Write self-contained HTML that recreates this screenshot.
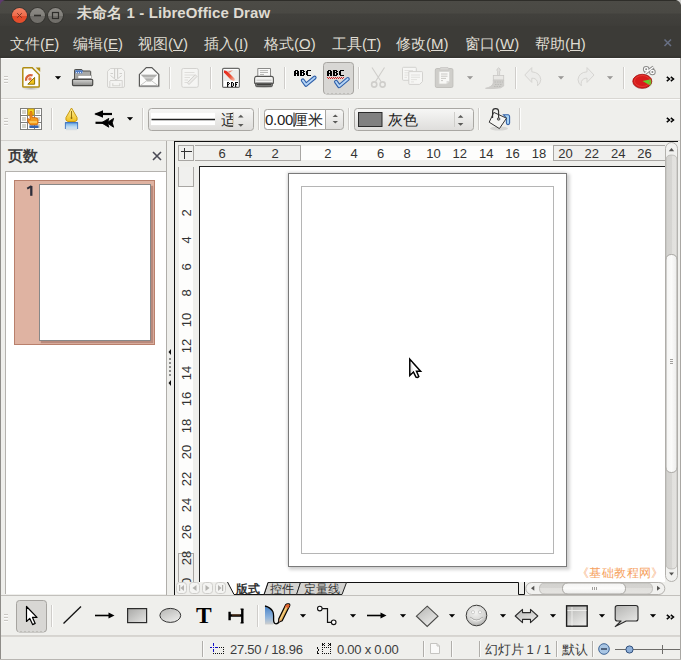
<!DOCTYPE html>
<html><head><meta charset="utf-8">
<style>
*{margin:0;padding:0;box-sizing:border-box}
html,body{width:681px;height:660px;overflow:hidden;background:#efefec;font-family:"Liberation Sans",sans-serif;position:relative}
.a{position:absolute}
svg{position:absolute;overflow:visible;z-index:3}
#title{left:0;top:0;width:681px;height:26px;background:linear-gradient(#2e2d29 0,#2e2d29 1px,#4c4b46 1px,#4a4944 13px,#42413d 14px,#3e3d39 26px);}
#menu{left:0;top:26px;width:681px;height:32px;background:linear-gradient(#3c3b37 0,#3c3b37 29px,#33322e 32px);}
.mi{position:absolute;top:8.5px;color:#dfdbd2;font-size:15px;white-space:nowrap}
.tb{left:0;width:681px;background:#efefec}
.sep{position:absolute;width:1px;background:#cfcdca;z-index:3;box-shadow:1px 0 0 #fdfdfc}
.grip{position:absolute;z-index:3;width:4px;height:8px;background:repeating-linear-gradient(#c9c7c3 0 1px,#fafaf9 1px 2px,transparent 2px 3px)}
.dd{position:absolute;width:0;height:0;border-left:3px solid transparent;border-right:3px solid transparent;border-top:3px solid #222}
.ddg{border-top-color:#aaa}
.rn{position:absolute;top:147px;font-size:13px;color:#333;width:20px;text-align:center;margin-left:-10px;line-height:13px}
.vn{position:absolute;left:179px;width:16px;height:20px;margin-top:-10px;font-size:13px;color:#333;line-height:16px;text-align:center}
.vn span{display:inline-block;transform:rotate(-90deg);white-space:nowrap}
.st{position:absolute;top:642px;font-size:13px;color:#3c3c3c;white-space:nowrap;line-height:15px;letter-spacing:-0.25px}
.ssep{position:absolute;top:641px;width:1px;height:16px;background:#b0aeaa;box-shadow:1px 0 0 #fafaf9}
</style></head><body>

<!-- TITLE BAR -->
<div id="title" class="a">
  <svg style="left:0;top:0" width="70" height="27" viewBox="0 0 70 27">
    <path d="M0 0H5Q1 1 0 5Z" fill="#5e3a6e"/>
    <defs>
      <linearGradient id="gc" x1="0" y1="0" x2="0" y2="1"><stop offset="0" stop-color="#f38466"/><stop offset="0.5" stop-color="#ee6c4c"/><stop offset="0.55" stop-color="#e44a2a"/><stop offset="1" stop-color="#e4502e"/></linearGradient>
      <linearGradient id="gm" x1="0" y1="0" x2="0" y2="1"><stop offset="0" stop-color="#8c8a85"/><stop offset="0.5" stop-color="#82807b"/><stop offset="0.55" stop-color="#6e6c68"/><stop offset="1" stop-color="#72706b"/></linearGradient>
    </defs>
    <circle cx="19.5" cy="15.5" r="8.3" fill="#34332f"/>
    <circle cx="19.5" cy="15.5" r="7.5" fill="url(#gc)"/>
    <path d="M17.2 13.2L21.8 17.8M21.8 13.2L17.2 17.8" stroke="#7a3424" stroke-width="1"/>
    <circle cx="37.5" cy="15.5" r="8.3" fill="#34332f"/>
    <circle cx="37.5" cy="15.5" r="7.5" fill="url(#gm)"/>
    <path d="M34 15.5H41" stroke="#2e2d2a" stroke-width="1.6"/>
    <circle cx="55.5" cy="15.5" r="8.3" fill="#34332f"/>
    <circle cx="55.5" cy="15.5" r="7.5" fill="url(#gm)"/>
    <rect x="52.5" y="12.5" width="6" height="6" fill="none" stroke="#2e2d2a" stroke-width="1.2"/>
  </svg>
  <div class="a" style="left:77px;top:4px;color:#dfdbd2;font-size:15px;font-weight:bold;letter-spacing:0.1px;white-space:nowrap">未命名 1 - LibreOffice Draw</div>
  <svg style="left:676px;top:0" width="5" height="6"><path d="M0 0H5V5Q4 1 0 0Z" fill="#cfcfcd"/></svg>
</div>

<!-- MENU -->
<div id="menu" class="a">
  <span class="mi" style="left:10px">文件(<u>F</u>)</span>
  <span class="mi" style="left:73px">编辑(<u>E</u>)</span>
  <span class="mi" style="left:138px">视图(<u>V</u>)</span>
  <span class="mi" style="left:204px">插入(<u>I</u>)</span>
  <span class="mi" style="left:264px">格式(<u>O</u>)</span>
  <span class="mi" style="left:332px">工具(<u>T</u>)</span>
  <span class="mi" style="left:396px">修改(<u>M</u>)</span>
  <span class="mi" style="left:465px">窗口(<u>W</u>)</span>
  <span class="mi" style="left:535px">帮助(<u>H</u>)</span>
  <svg style="left:663px;top:12px" width="10" height="9"><path d="M1.5 1.5L8 8M8 1.5L1.5 8" stroke="#687084" stroke-width="1.5" fill="none"/></svg>
</div>

<!-- TOOLBAR 1 -->
<div class="a tb" style="top:58px;height:41px;border-top:1px solid #fbfbfa;border-bottom:1px solid #d9d7d3"></div>


<!-- TOOLBAR 2 -->
<div class="a tb" style="top:99px;height:42px;border-top:1px solid #fbfbfa;border-bottom:1px solid #d3d1cd"></div>
<div id="tb2icons"></div>
<div class="sep" style="left:169px;top:67px;height:22px"></div>
<div class="sep" style="left:210px;top:67px;height:22px"></div>
<div class="sep" style="left:284px;top:67px;height:22px"></div>
<div class="sep" style="left:358px;top:67px;height:22px"></div>
<div class="sep" style="left:515px;top:67px;height:22px"></div>
<div class="sep" style="left:623px;top:67px;height:22px"></div>
<div class="sep" style="left:51px;top:108px;height:22px"></div>
<div class="sep" style="left:142px;top:108px;height:22px"></div>
<div class="sep" style="left:258px;top:108px;height:22px"></div>
<div class="sep" style="left:348px;top:108px;height:22px"></div>
<div class="sep" style="left:478px;top:108px;height:22px"></div>
<div class="sep" style="left:519px;top:108px;height:22px"></div>
<div class="sep" style="left:51px;top:605px;height:22px"></div>
<div class="sep" style="left:257px;top:605px;height:22px"></div>
<svg style="left:54.5px;top:75.5px" width="7" height="5"><path d="M0.5 0.5H5.5L3 3.2Z" fill="#000" stroke="#000" stroke-width="0.6"/></svg>
<svg style="left:466.5px;top:75.5px" width="7" height="5"><path d="M0.5 0.5H5.5L3 3.2Z" fill="#9a9997" stroke="#9a9997" stroke-width="0.6"/></svg>
<svg style="left:557.5px;top:75.5px" width="7" height="5"><path d="M0.5 0.5H5.5L3 3.2Z" fill="#9a9997" stroke="#9a9997" stroke-width="0.6"/></svg>
<svg style="left:607.0px;top:75.5px" width="7" height="5"><path d="M0.5 0.5H5.5L3 3.2Z" fill="#9a9997" stroke="#9a9997" stroke-width="0.6"/></svg>
<svg style="left:127.0px;top:116.5px" width="7" height="5"><path d="M0.5 0.5H5.5L3 3.2Z" fill="#000" stroke="#000" stroke-width="0.6"/></svg>
<svg style="left:299.5px;top:614.0px" width="7" height="5"><path d="M0.5 0.5H5.5L3 3.2Z" fill="#000" stroke="#000" stroke-width="0.6"/></svg>
<svg style="left:349.5px;top:614.0px" width="7" height="5"><path d="M0.5 0.5H5.5L3 3.2Z" fill="#000" stroke="#000" stroke-width="0.6"/></svg>
<svg style="left:399.5px;top:614.0px" width="7" height="5"><path d="M0.5 0.5H5.5L3 3.2Z" fill="#000" stroke="#000" stroke-width="0.6"/></svg>
<svg style="left:449.0px;top:614.0px" width="7" height="5"><path d="M0.5 0.5H5.5L3 3.2Z" fill="#000" stroke="#000" stroke-width="0.6"/></svg>
<svg style="left:499.5px;top:614.0px" width="7" height="5"><path d="M0.5 0.5H5.5L3 3.2Z" fill="#000" stroke="#000" stroke-width="0.6"/></svg>
<svg style="left:549.5px;top:614.0px" width="7" height="5"><path d="M0.5 0.5H5.5L3 3.2Z" fill="#000" stroke="#000" stroke-width="0.6"/></svg>
<svg style="left:599.0px;top:614.0px" width="7" height="5"><path d="M0.5 0.5H5.5L3 3.2Z" fill="#000" stroke="#000" stroke-width="0.6"/></svg>
<svg style="left:649.5px;top:614.0px" width="7" height="5"><path d="M0.5 0.5H5.5L3 3.2Z" fill="#000" stroke="#000" stroke-width="0.6"/></svg>
<svg style="left:665.5px;top:75.5px" width="9" height="6"><path d="M0.8 0.8L3.5 3L0.8 5.2M4.8 0.8L7.5 3L4.8 5.2" stroke="#000" stroke-width="1.5" fill="none"/></svg>
<svg style="left:665.5px;top:116.5px" width="9" height="6"><path d="M0.8 0.8L3.5 3L0.8 5.2M4.8 0.8L7.5 3L4.8 5.2" stroke="#000" stroke-width="1.5" fill="none"/></svg>
<svg style="left:665.5px;top:613.5px" width="9" height="6"><path d="M0.8 0.8L3.5 3L0.8 5.2M4.8 0.8L7.5 3L4.8 5.2" stroke="#000" stroke-width="1.5" fill="none"/></svg>
<div class="grip" style="left:4px;top:76px"></div>
<div class="grip" style="left:4px;top:118px"></div>
<div class="grip" style="left:4px;top:614px"></div>


<!-- LEFT PANE -->
<div class="a" style="left:0;top:58px;width:1px;height:602px;background:#8f8d89;z-index:2"></div>
<div class="a" style="left:8px;top:147px;font-size:15px;font-weight:bold;color:#3c3c3c">页数</div>
<svg style="left:152px;top:151px" width="10" height="10"><path d="M1 1L9 9M9 1L1 9" stroke="#4a4a55" stroke-width="1.6"/></svg>
<div class="a" style="left:5px;top:171px;width:162px;height:423px;background:#fff;border-top:1px solid #b4b2ae;border-left:1px solid #b4b2ae"></div>
<div class="a" style="left:166px;top:141px;width:1px;height:454px;background:#b0aeaa"></div>
<div class="a" style="left:14px;top:180px;width:141px;height:165px;background:#dfb3a2;border:1px solid #b9806c"></div>
<svg style="left:25px;top:184px" width="10" height="14" viewBox="25 184 10 14"><path d="M31.3 186V195.8" stroke="#2e2e3a" stroke-width="2.3"/><path d="M27.2 188.6L31.5 186.2" stroke="#2e2e3a" stroke-width="1.9"/></svg>
<div class="a" style="left:39px;top:184px;width:112px;height:157px;background:#fff;border:1px solid #888;box-shadow:2px 2px 1px #b98a7c"></div>
<!-- splitter -->
<svg style="left:167px;top:340px" width="7" height="50">
  <path d="M4 9L1.5 12L4 15Z" fill="#111"/>
  <path d="M4 40L1.5 43L4 46Z" fill="#111"/>
  <circle cx="3" cy="19" r="0.8" fill="#111"/><circle cx="3" cy="23" r="0.8" fill="#111"/><circle cx="3" cy="27" r="0.8" fill="#111"/><circle cx="3" cy="31" r="0.8" fill="#111"/><circle cx="3" cy="35" r="0.8" fill="#111"/>
</svg>

<!-- CANVAS AREA -->
<div class="a" style="left:174px;top:141px;width:504px;height:1px;background:#111"></div>
<div class="a" style="left:174px;top:141px;width:1px;height:454px;background:#111"></div>
<!-- ruler corner -->
<div class="a" style="left:178px;top:145px;width:16px;height:16px;border:1px solid #a8a6a3;background:#f0f0ee"></div>
<svg style="left:178px;top:145px" width="16" height="16"><path d="M3 6.5H14M6.5 3V14" stroke="#333" stroke-width="1"/></svg>
<!-- horizontal ruler -->
<div class="a" style="left:195px;top:145px;width:106px;height:16px;border:1px solid #a8a6a3;border-left:none;background:#f0f0ee"></div>
<div class="a" style="left:301px;top:146px;width:252px;height:14px;background:#fdfdfc"></div>
<div class="a" style="left:553px;top:145px;width:112px;height:16px;border:1px solid #a8a6a3;border-right:none;background:#f0f0ee"></div>
<div class="rn" style="left:222.2px">6</div>
<div class="rn" style="left:248.6px">4</div>
<div class="rn" style="left:275.0px">2</div>
<div class="rn" style="left:327.8px">2</div>
<div class="rn" style="left:354.2px">4</div>
<div class="rn" style="left:380.6px">6</div>
<div class="rn" style="left:407.0px">8</div>
<div class="rn" style="left:433.4px">10</div>
<div class="rn" style="left:459.8px">12</div>
<div class="rn" style="left:486.2px">14</div>
<div class="rn" style="left:512.6px">16</div>
<div class="rn" style="left:539.0px">18</div>
<div class="rn" style="left:565.4px">20</div>
<div class="rn" style="left:591.8px">22</div>
<div class="rn" style="left:618.2px">24</div>
<div class="rn" style="left:644.6px">26</div>
<!-- vertical ruler -->
<div class="a" style="left:178px;top:167px;width:16px;height:20px;border:1px solid #a8a6a3;border-top:none;background:#f0f0ee"></div>
<div class="a" style="left:179px;top:187px;width:14px;height:366px;background:#fdfdfc"></div>
<div class="a" style="left:178px;top:553px;width:16px;height:29px;border:1px solid #a8a6a3;border-bottom:none;background:#f0f0ee"></div>
<div class="a" style="left:0;top:0;width:681px;height:582px;overflow:hidden">
<div class="vn" style="top:215.4px"><span>2</span></div>
<div class="vn" style="top:241.9px"><span>4</span></div>
<div class="vn" style="top:268.5px"><span>6</span></div>
<div class="vn" style="top:295.0px"><span>8</span></div>
<div class="vn" style="top:321.5px"><span>10</span></div>
<div class="vn" style="top:348.0px"><span>12</span></div>
<div class="vn" style="top:374.5px"><span>14</span></div>
<div class="vn" style="top:401.0px"><span>16</span></div>
<div class="vn" style="top:427.5px"><span>18</span></div>
<div class="vn" style="top:454.0px"><span>20</span></div>
<div class="vn" style="top:480.5px"><span>22</span></div>
<div class="vn" style="top:507.0px"><span>24</span></div>
<div class="vn" style="top:533.5px"><span>26</span></div>
<div class="vn" style="top:560.0px"><span>28</span></div>
<div class="vn" style="top:586.5px"><span>30</span></div>
</div>
<!-- canvas -->
<div class="a" style="left:199px;top:166px;width:466px;height:416px;background:#fff;border-left:1px solid #222;border-top:1px solid #222"></div>
<!-- page shadow -->
<div class="a" style="left:284px;top:169px;width:287px;height:402px;background:radial-gradient(closest-side,#999 0,#999 100%);opacity:0.0"></div>
<div class="a" style="left:288px;top:173px;width:279px;height:394px;background:#fff;border:1px solid #7a7a7a;box-shadow:2px 2px 3px 1px rgba(0,0,0,0.17),-1px -1px 3px 0 rgba(0,0,0,0.12)"></div>
<div class="a" style="left:301px;top:186px;width:253px;height:368px;border:1px solid #b5b5b5"></div>
<!-- mouse cursor -->
<svg style="left:400px;top:350px" width="30" height="35" viewBox="400 350 30 35">
  <path d="M409.8 359.2V375.5L413.4 372L416 377.2Q417.5 378 418.8 376.5L416.5 371.2H420.6Z" fill="#fff" stroke="#000" stroke-width="1.5" stroke-linejoin="miter"/>
  <path d="M411 362V373L413 371L411.5 362Z" fill="#e6e6e6"/>
</svg>
<!-- watermark -->
<div class="a" style="left:577px;top:564.5px;font-size:12px;color:#f6a160;white-space:nowrap;letter-spacing:0.4px">《基础教程网》</div>

<!-- vertical scrollbar -->
<svg style="left:664px;top:141px" width="16" height="442" viewBox="664 141 16 442">
  <defs>
    <linearGradient id="trv" x1="0" y1="0" x2="1" y2="0"><stop offset="0" stop-color="#d3d2cf"/><stop offset="0.5" stop-color="#d6d5d2"/><stop offset="0.5" stop-color="#e1e0dd"/><stop offset="1" stop-color="#e4e3e0"/></linearGradient>
    <linearGradient id="thv" x1="0" y1="0" x2="1" y2="0"><stop offset="0" stop-color="#f4f4f3"/><stop offset="0.5" stop-color="#fbfbfa"/><stop offset="1" stop-color="#ececeb"/></linearGradient>
  </defs>
  <rect x="665.5" y="142.5" width="12" height="439" rx="6" fill="#f1f1ef" stroke="#b3b1ad" stroke-width="1"/>
  <path d="M666 160Q666 155 671.5 155Q677 155 677 160V564Q677 569 671.5 569Q666 569 666 564Z" fill="url(#trv)" stroke="#b8b6b2" stroke-width="0.8"/>
  <path d="M666 260Q666 254.5 671.5 254.5Q677 254.5 677 260V467Q677 472.5 671.5 472.5Q666 472.5 666 467Z" fill="url(#thv)" stroke="#a9a7a3" stroke-width="1"/>
  <path d="M668.8 151.2L671.5 148L674.2 151.2Z" fill="#555452"/>
  <path d="M669 572.5H674L671.5 575.5Z" fill="#555452"/>
  <path d="M670 359.5H673M670 361.5H673M670 363.5H673" stroke="#8a8884" stroke-width="0.8"/>
</svg>
<!-- tab bar -->
<div class="a" style="left:175px;top:582px;width:504px;height:13px;background:#efefec"></div>
<svg style="left:174px;top:581px" width="355" height="15" viewBox="174 581 355 15">
  <g fill="#f4f4f2" stroke="#cfcecb" stroke-width="1">
    <rect x="176.5" y="582.5" width="10" height="11" rx="3"/>
    <rect x="189.5" y="582.5" width="10" height="11" rx="3"/>
    <rect x="202.5" y="582.5" width="10" height="11" rx="3"/>
    <rect x="215.5" y="582.5" width="10" height="11" rx="3"/>
  </g>
  <g fill="#b3b2af">
    <rect x="179" y="585" width="1.2" height="6"/><path d="M184 585V591L180.5 588Z"/>
    <path d="M196.5 585V591L192.5 588Z"/>
    <path d="M205.5 585V591L209.5 588Z"/>
    <path d="M218 585V591L221.5 588Z"/><rect x="222" y="585" width="1.2" height="6"/>
  </g>
  <path d="M230 582.5H518.5V594.5H524.5V582" fill="none" stroke="#111" stroke-width="1"/>
  <path d="M268 582.5L264 594.5H297L300.5 582.5Z" fill="#d4d3d0" stroke="#222" stroke-width="1"/>
  <path d="M300.5 582.5L296.5 594.5H342L346.5 582.5Z" fill="#d4d3d0" stroke="#222" stroke-width="1"/>
  <path d="M227.5 582L234 594.5H264L268 582Z" fill="#fff" stroke="none"/>
  <path d="M227.5 582L234 594.5H264L268 582.5" fill="none" stroke="#111" stroke-width="1"/>
</svg>
<div class="a" style="left:236px;top:581px;font-size:12px;font-weight:bold;color:#333;z-index:4;white-space:nowrap">版式</div>
<div class="a" style="left:270px;top:581px;font-size:12px;color:#333;z-index:4;white-space:nowrap">控件</div>
<div class="a" style="left:304px;top:581px;font-size:12px;color:#333;z-index:4;white-space:nowrap">定量线</div>

<!-- horizontal scrollbar -->
<svg style="left:524px;top:581px" width="143" height="15" viewBox="524 581 143 15">
  <defs>
    <linearGradient id="trh" x1="0" y1="0" x2="0" y2="1"><stop offset="0" stop-color="#d3d2cf"/><stop offset="0.5" stop-color="#d6d5d2"/><stop offset="0.5" stop-color="#e1e0dd"/><stop offset="1" stop-color="#e4e3e0"/></linearGradient>
    <linearGradient id="thh" x1="0" y1="0" x2="0" y2="1"><stop offset="0" stop-color="#f4f4f3"/><stop offset="0.5" stop-color="#fbfbfa"/><stop offset="1" stop-color="#ececeb"/></linearGradient>
  </defs>
  <rect x="525.8" y="582.5" width="139" height="12" rx="6" fill="#f1f1ef" stroke="#b3b1ad" stroke-width="1"/>
  <path d="M545 583Q539.5 583 539.5 588.5Q539.5 594 545 594H647Q652.5 594 652.5 588.5Q652.5 583 647 583Z" fill="url(#trh)" stroke="#b8b6b2" stroke-width="0.8"/>
  <path d="M568 583Q562.5 583 562.5 588.5Q562.5 594 568 594H620Q625.5 594 625.5 588.5Q625.5 583 620 583Z" fill="url(#thh)" stroke="#a9a7a3" stroke-width="1"/>
  <path d="M534.3 585.8V590.8L531 588.3Z" fill="#555452"/>
  <path d="M657 585.8V590.8L660.3 588.3Z" fill="#555452"/>
  <path d="M592.5 587V590M594.5 587V590M596.5 587V590" stroke="#8a8884" stroke-width="0.8"/>
</svg>
<!-- DRAWING TOOLBAR -->
<div class="a tb" style="top:595px;height:41px;border-top:1px solid #c2c0bc;border-bottom:1px solid #d6d4d0"></div>
<div id="tb3icons"></div>

<!-- STATUS BAR -->
<div class="a" style="left:0;top:636px;width:681px;height:24px;background:#efefec"></div>
<div class="a" style="left:0;top:636px;width:681px;height:1px;background:#d8d6d2"></div>
<div class="ssep" style="left:202px"></div>
<div class="ssep" style="left:423px"></div>
<div class="ssep" style="left:451px"></div>
<div class="ssep" style="left:479px"></div>
<div class="ssep" style="left:556px"></div>
<div class="ssep" style="left:592px"></div>
<svg style="left:205px;top:638px" width="25" height="20" viewBox="205 638 25 20" shape-rendering="crispEdges"><g fill="#1010c8"><rect x="213" y="643" width="1" height="3"/><rect x="213" y="649" width="1" height="3"/><rect x="210" y="647" width="2" height="1"/><rect x="215" y="647" width="3" height="1"/><rect x="213" y="647" width="1" height="1"/></g><g fill="#111"><rect x="219" y="647" width="1" height="1"/><rect x="221" y="647" width="1" height="1"/><rect x="223" y="647" width="1" height="1"/><rect x="223" y="649" width="1" height="1"/><rect x="223" y="651" width="1" height="1"/><rect x="213" y="653" width="1" height="1"/><rect x="215" y="653" width="1" height="1"/><rect x="217" y="653" width="1" height="1"/><rect x="219" y="653" width="1" height="1"/><rect x="221" y="653" width="1" height="1"/><rect x="223" y="653" width="1" height="1"/></g></svg>
<div class="st" style="left:230px">27.50 / 18.96</div>
<svg style="left:312px;top:638px" width="25" height="20" viewBox="312 638 25 20" shape-rendering="crispEdges"><g fill="#111"><rect x="322" y="647" width="1" height="1"/><rect x="322" y="653" width="1" height="1"/><rect x="324" y="647" width="1" height="1"/><rect x="324" y="653" width="1" height="1"/><rect x="326" y="647" width="1" height="1"/><rect x="326" y="653" width="1" height="1"/><rect x="328" y="647" width="1" height="1"/><rect x="328" y="653" width="1" height="1"/><rect x="330" y="647" width="1" height="1"/><rect x="330" y="653" width="1" height="1"/><rect x="322" y="649" width="1" height="1"/><rect x="330" y="649" width="1" height="1"/><rect x="322" y="651" width="1" height="1"/><rect x="330" y="651" width="1" height="1"/><rect x="322" y="643" width="1" height="3"/><rect x="323" y="644" width="1" height="1"/><rect x="324" y="643" width="1" height="1"/><rect x="324" y="645" width="1" height="1"/><rect x="330" y="643" width="1" height="3"/><rect x="329" y="644" width="1" height="1"/><rect x="328" y="643" width="1" height="1"/><rect x="328" y="645" width="1" height="1"/><rect x="317" y="647" width="1" height="2"/><rect x="318" y="649" width="1" height="1"/><rect x="317" y="651" width="1" height="3"/><rect x="318" y="650" width="1" height="1"/><rect x="318" y="653" width="1" height="1"/></g></svg>
<div class="st" style="left:337px">0.00 x 0.00</div>
<svg style="left:429px;top:642px" width="12" height="13" viewBox="0 0 12 13">
  <path d="M1.5 1.5H8L10.5 4V11.5H1.5Z" fill="#fafaf9" stroke="#c5c4c1" stroke-width="1"/>
  <path d="M8 1.5V4H10.5" fill="none" stroke="#c5c4c1"/>
</svg>
<div class="st" style="left:485px">幻灯片 1 / 1</div>
<div class="st" style="left:562px">默认</div>
<svg style="left:598px;top:643px" width="83" height="12" viewBox="0 0 83 12">
  <circle cx="6" cy="6" r="5.3" fill="#a9c6e4" stroke="#3d6496" stroke-width="1"/>
  <path d="M3 6H9" stroke="#22314a" stroke-width="1.3"/>
  <path d="M17 6.5H83" stroke="#6d6c69" stroke-width="1"/>
  <path d="M64.5 2V11" stroke="#6d6c69" stroke-width="1"/>
  <circle cx="31.5" cy="6.5" r="3.6" fill="#8fb0d8" stroke="#2f4f7d" stroke-width="1"/>
</svg>


<div class="a" style="left:680px;top:58px;width:1px;height:602px;background:#a9a7a3;z-index:5"></div>
<!-- ===== TOOLBAR 1 ICONS ===== -->
<svg style="left:0;top:57px" width="681" height="42" viewBox="0 57 681 42">
  <defs>
    <linearGradient id="tray" x1="0" y1="0" x2="0" y2="1"><stop offset="0" stop-color="#d6d6d4"/><stop offset="1" stop-color="#8a8a88"/></linearGradient>
    <linearGradient id="flap" x1="0" y1="0" x2="0" y2="1"><stop offset="0" stop-color="#c4c4c2"/><stop offset="0.25" stop-color="#a4a4a2"/><stop offset="0.5" stop-color="#d2d2d0"/><stop offset="1" stop-color="#9c9c9a"/></linearGradient>
    <radialGradient id="shd" cx="0.5" cy="0.5" r="0.5"><stop offset="0" stop-color="#000" stop-opacity="0.22"/><stop offset="1" stop-color="#000" stop-opacity="0"/></radialGradient>
  </defs>
  <!-- new doc -->
  <ellipse cx="31" cy="88.5" rx="9" ry="2" fill="url(#shd)"/>
  <path d="M22.8 68.6Q22.8 67.8 23.6 67.8H32.2L39.2 74.8V86.2Q39.2 87 38.4 87H23.6Q22.8 87 22.8 86.2Z" fill="#fdfdfb" stroke="#b08d12" stroke-width="1.5"/>
  <path d="M35.6 67.4H40.2V72Z" fill="#b08d12"/>
  <path d="M26.2 80.8A4.6 4.6 0 0 1 32.6 75.6" fill="none" stroke="#d6623a" stroke-width="2.2"/>
  <circle cx="30" cy="79" r="1.8" fill="#ef7b4f"/>
  <path d="M27.8 84.2L34.6 77.4V84.2Z" fill="#f2c21e" stroke="#8d7208" stroke-width="1"/>
  <!-- open folder -->
  <path d="M74.5 79.5V70.2Q74.5 69.5 75.2 69.5H81.8L83 71H90Q90.7 71 90.7 71.7V79.5Z" fill="#a9a9a7" stroke="#4f4f4d" stroke-width="1"/>
  <rect x="75.3" y="70.3" width="7.4" height="3" fill="#4f7cc6"/>
  <path d="M76 72.6H82.5" stroke="#fff" stroke-width="0.9" stroke-dasharray="1 1"/>
  <rect x="78" y="75.5" width="13.5" height="3.2" fill="#fff" stroke="#8a8a88" stroke-width="0.5"/>
  <path d="M72.5 80.2Q72.5 79.3 73.4 79.3H91.8Q92.7 79.3 92.7 80.2V84.6Q92.7 85.6 91.7 85.6H73.5Q72.5 85.6 72.5 84.6Z" fill="url(#tray)" stroke="#4a4a48" stroke-width="1.2"/>
  <!-- save disabled -->
  <g fill="none" stroke="#d4d3d0" stroke-width="1">
    <path d="M110.5 68.5H121.8L124.5 71.3V86Q124.5 87.5 123 87.5H109Q107.5 87.5 107.5 86V71.3Z" fill="#f4f4f2"/>
    <path d="M110 80.5H122.5M109.8 81V87M122.2 81V87"/>
    <path d="M112.8 83.3V85.8H119.8V83.3" stroke-width="1.1"/>
    <path d="M114.6 68.5V78.5M117.6 68.5V78.5" stroke="#cdccc9" stroke-width="1.1"/>
    <path d="M110.5 75.5L116.1 80L121.7 75.5M110.5 73.5H113M119.5 73.5H122" stroke="#d0cfcc"/>
  </g>
  <!-- email -->
  <path d="M146.3 67.6H151.8L158.8 74.4V86.2H139.4V74.4Z" fill="#fbfbfa" stroke="#5a5a58" stroke-width="1.2"/>
  <path d="M140.6 74.4H157.6L151.6 80.8H146.6Z" fill="url(#flap)"/>
  <path d="M140.2 85.6L147 80.5M158 85.6L151.2 80.5M147 81.2H151.2" stroke="#c2c2c0" stroke-width="0.9"/>
  <rect x="139.5" y="86.3" width="19.6" height="1" fill="#aaa" opacity="0.5"/>
  <!-- edit doc disabled -->
  <rect x="181.8" y="68.5" width="16.5" height="18.8" rx="1.6" fill="#f5f5f3" stroke="#d3d2cf" stroke-width="1"/>
  <path d="M184.5 72.5H194.5M184.5 75H194.5M184.5 77.5H190M184.5 80H188M184.5 82.5H187" stroke="#dcdbd8" stroke-width="0.9"/>
  <path d="M189 84.5L197 76.5L195.2 74.7L187.3 82.7Z" fill="#ecebe8" stroke="#cdccc9" stroke-width="0.9"/>
  <!-- pdf -->
  <defs><linearGradient id="pdfr" x1="0" y1="0" x2="1" y2="1"><stop offset="0" stop-color="#e8201a"/><stop offset="0.55" stop-color="#e84a30"/><stop offset="1" stop-color="#f8c8b8"/></linearGradient></defs>
  <rect x="222.6" y="68.4" width="16.8" height="19" rx="1.2" fill="#fff" stroke="#6a6a68" stroke-width="1.2"/>
  <rect x="224" y="70" width="14" height="11" fill="#ececea"/>
  <path d="M224 70.5Q226 70 228 72L234.5 78.5Q235.5 80.5 233.5 81L230.5 79.5L224 72.5Z" fill="url(#pdfr)"/>
  <path d="M228 71.5Q231 70.8 233 70.3Q230.5 72 229.5 72.8Z" fill="#f06a50" opacity="0.8"/>
  <g fill="#111" shape-rendering="crispEdges"><rect x="227" y="82" width="1" height="1"/><rect x="228" y="82" width="1" height="1"/><rect x="227" y="83" width="1" height="1"/><rect x="229" y="83" width="1" height="1"/><rect x="227" y="84" width="1" height="1"/><rect x="228" y="84" width="1" height="1"/><rect x="227" y="85" width="1" height="1"/><rect x="227" y="86" width="1" height="1"/><rect x="231" y="82" width="1" height="1"/><rect x="232" y="82" width="1" height="1"/><rect x="231" y="83" width="1" height="1"/><rect x="233" y="83" width="1" height="1"/><rect x="231" y="84" width="1" height="1"/><rect x="233" y="84" width="1" height="1"/><rect x="231" y="85" width="1" height="1"/><rect x="233" y="85" width="1" height="1"/><rect x="231" y="86" width="1" height="1"/><rect x="232" y="86" width="1" height="1"/><rect x="235" y="82" width="1" height="1"/><rect x="236" y="82" width="1" height="1"/><rect x="237" y="82" width="1" height="1"/><rect x="235" y="83" width="1" height="1"/><rect x="235" y="84" width="1" height="1"/><rect x="236" y="84" width="1" height="1"/><rect x="235" y="85" width="1" height="1"/><rect x="235" y="86" width="1" height="1"/></g><g fill="#111" opacity="0.55"><rect x="227.8" y="82" width="0.6" height="5"/><rect x="231.8" y="82" width="0.6" height="5"/><rect x="235.8" y="82" width="0.6" height="5"/></g>
  <!-- printer -->
  <ellipse cx="264" cy="87" rx="10" ry="1.5" fill="url(#shd)"/>
  <path d="M257.8 77V68.5H270.5V77" fill="#fafaf9" stroke="#8a8a88" stroke-width="1"/>
  <path d="M259.8 70.6H268M260 72.5H268M260 74.5H264" stroke="#a8a8a6" stroke-width="0.8"/>
  <path d="M254.6 78.4Q254.6 76.4 256.6 76.4H271.4Q273.4 76.4 273.4 78.4V83.2H254.6Z" fill="#f2f2f0" stroke="#555553" stroke-width="1.1"/>
  <path d="M256.5 80.2H271.5" stroke="#b8b8b6" stroke-width="0.8"/>
  <path d="M255.6 83.2H272.4V85.6Q272.4 86.6 271.4 86.6H256.6Q255.6 86.6 255.6 85.6Z" fill="#7a7a78" stroke="#4a4a48" stroke-width="0.9"/>
  <path d="M257 84.6H271" stroke="#3a3a38" stroke-width="1"/>
  <!-- spell ABC -->
  <g fill="#000" shape-rendering="crispEdges"><rect x="295" y="70" width="1" height="1"/><rect x="296" y="70" width="1" height="1"/><rect x="297" y="70" width="1" height="1"/><rect x="294" y="71" width="1" height="1"/><rect x="295" y="71" width="1" height="1"/><rect x="297" y="71" width="1" height="1"/><rect x="298" y="71" width="1" height="1"/><rect x="294" y="72" width="1" height="1"/><rect x="295" y="72" width="1" height="1"/><rect x="297" y="72" width="1" height="1"/><rect x="298" y="72" width="1" height="1"/><rect x="294" y="73" width="1" height="1"/><rect x="295" y="73" width="1" height="1"/><rect x="296" y="73" width="1" height="1"/><rect x="297" y="73" width="1" height="1"/><rect x="298" y="73" width="1" height="1"/><rect x="294" y="74" width="1" height="1"/><rect x="295" y="74" width="1" height="1"/><rect x="297" y="74" width="1" height="1"/><rect x="298" y="74" width="1" height="1"/><rect x="294" y="75" width="1" height="1"/><rect x="295" y="75" width="1" height="1"/><rect x="297" y="75" width="1" height="1"/><rect x="298" y="75" width="1" height="1"/><rect x="300" y="70" width="1" height="1"/><rect x="301" y="70" width="1" height="1"/><rect x="302" y="70" width="1" height="1"/><rect x="303" y="70" width="1" height="1"/><rect x="300" y="71" width="1" height="1"/><rect x="301" y="71" width="1" height="1"/><rect x="303" y="71" width="1" height="1"/><rect x="304" y="71" width="1" height="1"/><rect x="300" y="72" width="1" height="1"/><rect x="301" y="72" width="1" height="1"/><rect x="302" y="72" width="1" height="1"/><rect x="303" y="72" width="1" height="1"/><rect x="300" y="73" width="1" height="1"/><rect x="301" y="73" width="1" height="1"/><rect x="303" y="73" width="1" height="1"/><rect x="304" y="73" width="1" height="1"/><rect x="300" y="74" width="1" height="1"/><rect x="301" y="74" width="1" height="1"/><rect x="303" y="74" width="1" height="1"/><rect x="304" y="74" width="1" height="1"/><rect x="300" y="75" width="1" height="1"/><rect x="301" y="75" width="1" height="1"/><rect x="302" y="75" width="1" height="1"/><rect x="303" y="75" width="1" height="1"/><rect x="307" y="70" width="1" height="1"/><rect x="308" y="70" width="1" height="1"/><rect x="309" y="70" width="1" height="1"/><rect x="310" y="70" width="1" height="1"/><rect x="306" y="71" width="1" height="1"/><rect x="307" y="71" width="1" height="1"/><rect x="306" y="72" width="1" height="1"/><rect x="307" y="72" width="1" height="1"/><rect x="306" y="73" width="1" height="1"/><rect x="307" y="73" width="1" height="1"/><rect x="306" y="74" width="1" height="1"/><rect x="307" y="74" width="1" height="1"/><rect x="307" y="75" width="1" height="1"/><rect x="308" y="75" width="1" height="1"/><rect x="309" y="75" width="1" height="1"/><rect x="310" y="75" width="1" height="1"/></g>
  <path d="M302.8 80.4L306 84.8L314.6 77.6" fill="none" stroke="#2f5fa8" stroke-width="4" stroke-linecap="round" stroke-linejoin="round"/>
  <path d="M302.8 80.4L306 84.8L314.6 77.6" fill="none" stroke="#b4d4f6" stroke-width="1.8" stroke-linecap="round" stroke-linejoin="round"/>
  <!-- autospell pressed -->
  <rect x="323.5" y="62.5" width="30" height="31.5" rx="3" fill="#d8d7d4" stroke="#a6a4a0" stroke-width="1"/>
  <path d="M325 93.3H352" stroke="#eeeeec" stroke-width="0.6" stroke-dasharray="2 2"/>
  <g fill="#000" shape-rendering="crispEdges"><rect x="328" y="70" width="1" height="1"/><rect x="329" y="70" width="1" height="1"/><rect x="330" y="70" width="1" height="1"/><rect x="327" y="71" width="1" height="1"/><rect x="328" y="71" width="1" height="1"/><rect x="330" y="71" width="1" height="1"/><rect x="331" y="71" width="1" height="1"/><rect x="327" y="72" width="1" height="1"/><rect x="328" y="72" width="1" height="1"/><rect x="330" y="72" width="1" height="1"/><rect x="331" y="72" width="1" height="1"/><rect x="327" y="73" width="1" height="1"/><rect x="328" y="73" width="1" height="1"/><rect x="329" y="73" width="1" height="1"/><rect x="330" y="73" width="1" height="1"/><rect x="331" y="73" width="1" height="1"/><rect x="327" y="74" width="1" height="1"/><rect x="328" y="74" width="1" height="1"/><rect x="330" y="74" width="1" height="1"/><rect x="331" y="74" width="1" height="1"/><rect x="327" y="75" width="1" height="1"/><rect x="328" y="75" width="1" height="1"/><rect x="330" y="75" width="1" height="1"/><rect x="331" y="75" width="1" height="1"/><rect x="333" y="70" width="1" height="1"/><rect x="334" y="70" width="1" height="1"/><rect x="335" y="70" width="1" height="1"/><rect x="336" y="70" width="1" height="1"/><rect x="333" y="71" width="1" height="1"/><rect x="334" y="71" width="1" height="1"/><rect x="336" y="71" width="1" height="1"/><rect x="337" y="71" width="1" height="1"/><rect x="333" y="72" width="1" height="1"/><rect x="334" y="72" width="1" height="1"/><rect x="335" y="72" width="1" height="1"/><rect x="336" y="72" width="1" height="1"/><rect x="333" y="73" width="1" height="1"/><rect x="334" y="73" width="1" height="1"/><rect x="336" y="73" width="1" height="1"/><rect x="337" y="73" width="1" height="1"/><rect x="333" y="74" width="1" height="1"/><rect x="334" y="74" width="1" height="1"/><rect x="336" y="74" width="1" height="1"/><rect x="337" y="74" width="1" height="1"/><rect x="333" y="75" width="1" height="1"/><rect x="334" y="75" width="1" height="1"/><rect x="335" y="75" width="1" height="1"/><rect x="336" y="75" width="1" height="1"/><rect x="340" y="70" width="1" height="1"/><rect x="341" y="70" width="1" height="1"/><rect x="342" y="70" width="1" height="1"/><rect x="343" y="70" width="1" height="1"/><rect x="339" y="71" width="1" height="1"/><rect x="340" y="71" width="1" height="1"/><rect x="339" y="72" width="1" height="1"/><rect x="340" y="72" width="1" height="1"/><rect x="339" y="73" width="1" height="1"/><rect x="340" y="73" width="1" height="1"/><rect x="339" y="74" width="1" height="1"/><rect x="340" y="74" width="1" height="1"/><rect x="340" y="75" width="1" height="1"/><rect x="341" y="75" width="1" height="1"/><rect x="342" y="75" width="1" height="1"/><rect x="343" y="75" width="1" height="1"/></g>
  <g fill="#d42020" shape-rendering="crispEdges"><rect x="327" y="77" width="1" height="1"/><rect x="328" y="78" width="1" height="1"/><rect x="329" y="77" width="1" height="1"/><rect x="330" y="78" width="1" height="1"/><rect x="331" y="77" width="1" height="1"/><rect x="332" y="78" width="1" height="1"/><rect x="333" y="77" width="1" height="1"/><rect x="334" y="78" width="1" height="1"/><rect x="335" y="77" width="1" height="1"/><rect x="336" y="78" width="1" height="1"/><rect x="337" y="77" width="1" height="1"/><rect x="338" y="78" width="1" height="1"/><rect x="339" y="77" width="1" height="1"/><rect x="340" y="78" width="1" height="1"/><rect x="341" y="77" width="1" height="1"/><rect x="342" y="78" width="1" height="1"/><rect x="343" y="77" width="1" height="1"/></g>
  <path d="M336 81.8L339.2 86.2L347.8 79" fill="none" stroke="#2f5fa8" stroke-width="4" stroke-linecap="round" stroke-linejoin="round"/>
  <path d="M336 81.8L339.2 86.2L347.8 79" fill="none" stroke="#b4d4f6" stroke-width="1.8" stroke-linecap="round" stroke-linejoin="round"/>
  <!-- scissors disabled -->
  <g fill="none" stroke="#cfcecb" stroke-width="1.1">
    <path d="M375.5 81.5L384.5 67.5M381 81.5L372 67.5"/>
    <circle cx="374.2" cy="84.5" r="2.6" stroke-width="1.6"/>
    <circle cx="382.6" cy="84.5" r="2.6" stroke-width="1.6"/>
  </g>
  <!-- copy disabled -->
  <g fill="#f6f6f4" stroke="#d3d2cf" stroke-width="1">
    <rect x="402.5" y="67.3" width="13.8" height="13" rx="1"/>
    <path d="M404.5 70.5H413M404.5 72.8H413M404.5 75.1H408M404.5 77.4H407" stroke="#dddcd9" stroke-width="0.8"/>
    <path d="M408.8 71.6H421.8Q422.5 71.6 422.5 72.3V81.5L419.6 84.4H409.5Q408.8 84.4 408.8 83.7Z"/>
    <path d="M411 75H420M411 77.3H420M411 79.6H417M411 81.9H414" stroke="#dddcd9" stroke-width="0.8"/>
  </g>
  <!-- paste disabled -->
  <rect x="435.3" y="68.5" width="17.6" height="19" rx="1.5" fill="#cfceca" stroke="#c2c1bd" stroke-width="1"/>
  <path d="M439 71.5H449.5V81L446.5 84H439Z" fill="#f8f8f6" stroke="#d6d5d2" stroke-width="0.8"/>
  <path d="M446.5 84L449.5 81H446.5Z" fill="#dedddb"/>
  <path d="M440.5 67.5H448L449 70H439.5Z" fill="#d9d8d5" stroke="#c9c8c5" stroke-width="0.8"/>
  <path d="M441 74H447.5M441 76.2H447.5M441 78.4H446M441 80.6H443" stroke="#c4c3c0" stroke-width="0.9"/>
  <!-- clone brush disabled -->
  <g stroke="#c9c8c5" stroke-width="0.8">
    <path d="M497.6 75.5V71.2Q496.4 70.6 497.2 69L498.6 67.8L500 69Q500.8 70.6 499.6 71.2V75.5Z" fill="#e2e1de"/>
    <rect x="493.3" y="75.5" width="10.4" height="4.6" fill="#e9e8e5"/>
    <path d="M493.3 80.1H503.7V86Q501 88.6 496 88.3Q491 88.8 485.5 88.3Q492.2 87 493.3 83Z" fill="#cfcecb"/>
  </g>
  <path d="M494.5 82H503M495 84.5H502.5M494 86.5H501" stroke="#b8b7b4" stroke-width="0.8" stroke-dasharray="1.5 1"/>
  <!-- undo disabled -->
  <path d="M524.8 75L531.8 67.6V71.8Q540 72.5 540.8 79.5Q540.6 83.5 537.5 85.8Q538.3 80.5 535 78.8Q533.5 78.2 531.8 78.2V82.4Z" fill="#ececea" stroke="#d6d5d2" stroke-width="1"/>
  <!-- redo disabled -->
  <path d="M594 75L587 67.6V71.8Q578.8 72.5 578 79.5Q578.2 83.5 581.3 85.8Q580.5 80.5 583.8 78.8Q585.3 78.2 587 78.2V82.4Z" fill="#ececea" stroke="#d6d5d2" stroke-width="1"/>
  <!-- chart -->
  <ellipse cx="642.5" cy="82.8" rx="9.8" ry="6.3" fill="#000" opacity="0.12"/>
  <ellipse cx="642.3" cy="81.3" rx="9.5" ry="7" fill="#d81c1c" stroke="#a51010" stroke-width="0.8"/>
  <path d="M642.5 81L651 79.2Q652 82 650.3 85.5Z" fill="#62cf2a"/>
  <ellipse cx="642.3" cy="81" rx="7.8" ry="5.5" fill="none" stroke="#ee5a4a" stroke-width="0.7" opacity="0.7"/>
  <rect x="643.2" y="66.3" width="12.2" height="8.4" rx="3" fill="#f8f8f6" opacity="0.0"/>
  <g fill="none" stroke="#8a8a88" stroke-width="3.2"><circle cx="646.2" cy="69.3" r="1.7"/><circle cx="652.4" cy="72" r="1.7"/><path d="M645 73.5L653.5 67"/></g>
  <g fill="none" stroke="#fff" stroke-width="1.3"><circle cx="646.2" cy="69.3" r="1.7"/><circle cx="652.4" cy="72" r="1.7"/><path d="M645 73.5L653.5 67"/></g>
</svg>

<!-- ===== TOOLBAR 2 ICONS ===== -->
<svg style="left:0;top:99px" width="681" height="42" viewBox="0 99 681 42">
  <defs>
    <linearGradient id="cbg" x1="0" y1="0" x2="0" y2="1"><stop offset="0" stop-color="#f7f7f6"/><stop offset="1" stop-color="#dedddb"/></linearGradient>
    <linearGradient id="penb" x1="0" y1="0" x2="0" y2="1"><stop offset="0" stop-color="#2f6cc0"/><stop offset="0.2" stop-color="#7eb6e8"/><stop offset="0.6" stop-color="#c4def2"/><stop offset="1" stop-color="#dcdfe2"/></linearGradient>
    <linearGradient id="peny" x1="0" y1="0" x2="0" y2="1"><stop offset="0" stop-color="#fff2a0"/><stop offset="1" stop-color="#f0c020"/></linearGradient>
  </defs>
  <!-- grid with hand -->
  <rect x="20.5" y="108.5" width="21" height="21" fill="#fff" stroke="#7d7d7b" stroke-width="1"/>
  <path d="M27.5 108.5V129.5M34.5 108.5V129.5M20.5 115.5H41.5M20.5 122.5H41.5" stroke="#7d7d7b" stroke-width="1"/>
  <g fill="#d3d3cb"><rect x="22" y="110" width="4" height="4"/><rect x="36" y="110" width="4" height="4"/><rect x="22" y="117" width="4" height="4"/><rect x="36" y="117" width="4" height="4"/><rect x="22" y="124" width="4" height="4"/><rect x="36" y="124" width="4" height="4"/><rect x="29" y="124" width="4" height="4"/></g>
  <rect x="28" y="109" width="6" height="6" fill="#f2d51c" stroke="#d0a010" stroke-width="0.8"/>
  <path d="M30 112.5Q30 111.3 31 111.3Q32 111.3 32 112.5V117.5Q33.2 117 34 117.6Q35.2 117.2 36 118Q38 117.8 38 120V122.8Q38 124.8 36 125H31.5Q29.5 124.8 28.5 122.5L27.5 119.8Q27.2 118.5 28.5 118.8L30 120Z" fill="#f29a1c" stroke="#d2620a" stroke-width="0.9"/>
  <path d="M29.5 122H37" stroke="#fde080" stroke-width="1.2"/>
  <rect x="29.5" y="125.5" width="9" height="2.5" rx="0.6" fill="#3462b0"/>
  <!-- pen -->
  <path d="M71.5 108L66 117.5Q65 121 68 121.5H75Q78 121 77 117.5Z" fill="url(#peny)" stroke="#c89a10" stroke-width="1"/>
  <path d="M71.5 111V118" stroke="#8a6a08" stroke-width="0.9"/>
  <circle cx="71.5" cy="118" r="0.9" fill="#8a6a08"/>
  <path d="M65 122.2H78L77 130.3H66Z" fill="url(#penb)"/><path d="M65.4 129V122.6H77.6V129" fill="none" stroke="#3a70c0" stroke-width="0.9"/>
  <!-- arrows -->
  <path d="M95.5 114H112" stroke="#000" stroke-width="2.2"/>
  <path d="M94.2 114L103 110.2V117.8Z" fill="#000"/>
  <path d="M95.5 122.8H104" stroke="#000" stroke-width="2.2"/>
  <path d="M101.5 122.8L108.8 118.4L107.6 122.8L108.8 127.2Z M106.8 122.8L113.6 118.4L112.3 122.8L113.6 127.2Z" fill="#000" stroke="#000" stroke-width="0.9" stroke-linejoin="round"/>
  <!-- line style combo -->
  <rect x="148.5" y="108.5" width="105" height="22" rx="3" fill="url(#cbg)" stroke="#a9a7a3" stroke-width="1"/>
  <rect x="151" y="112.8" width="64" height="12.3" fill="#fff"/>
  <path d="M151.5 119.5H215" stroke="#222" stroke-width="1.3"/>
  <path d="M233.5 112V127" stroke="#cfcecb" stroke-width="1"/>
  <path d="M238 117.5L240.8 114.8L243.6 117.5Z M238 124L240.8 126.7L243.6 124Z" fill="#5a5a58"/>
  <!-- width spin -->
  <rect x="264.5" y="109.5" width="79" height="20" rx="3" fill="url(#cbg)" stroke="#a9a7a3" stroke-width="1"/>
  <path d="M267.5 109.5H325.5V129.5H267.5Q264.5 129.5 264.5 126.5V112.5Q264.5 109.5 267.5 109.5Z" fill="#fff" stroke="#a9a7a3" stroke-width="1"/>
  <path d="M332.6 117L335.3 114.4L338 117Z M332.6 121L335.3 123.6L338 121Z" fill="#5a5a58"/>
  <path d="M294 112.5V127" stroke="#222" stroke-width="1"/>
  <!-- color combo -->
  <rect x="354.5" y="108.5" width="119" height="22" rx="3" fill="url(#cbg)" stroke="#a9a7a3" stroke-width="1"/>
  <rect x="358.5" y="112.5" width="23.5" height="14" fill="#808080" stroke="#2a2a2a" stroke-width="1"/>
  <path d="M454.5 112V127" stroke="#cfcecb" stroke-width="1"/>
  <path d="M457.8 117.7L460.6 115L463.4 117.7Z M457.8 123L460.6 125.7L463.4 123Z" fill="#5a5a58"/>
  <!-- paint bucket -->
  <ellipse cx="499" cy="128.5" rx="9" ry="2" fill="#000" opacity="0.1"/>
  <path d="M503.5 114.8H507.8Q509.6 114.8 509.6 116.6V123Q509.6 124.6 508 124.6Q506.4 124.6 506.4 123V118Z" fill="#a8d4f4" stroke="#3562a8" stroke-width="1.1"/>
  <path d="M493.8 112.4L506.5 118.2L499.4 128.6L489.2 122.2Z" fill="#f4f4f2" stroke="#333" stroke-width="1"/>
  <path d="M492.6 118V111.5Q492.6 108.6 495.6 108.6Q498.6 108.6 498.6 111.5V118.2" fill="none" stroke="#2a2a2a" stroke-width="1.1"/>
  <circle cx="498.6" cy="119" r="1.3" fill="#999" stroke="#333" stroke-width="0.7"/>
</svg>
<div class="a" style="left:221px;top:111px;width:12px;height:17px;overflow:hidden;z-index:4"><div style="font-size:15px;color:#222;white-space:nowrap;line-height:17px">适</div></div>
<div class="a" style="left:265px;top:111px;font-size:15px;color:#222;white-space:nowrap;line-height:17px;z-index:4;letter-spacing:-0.3px">0.00厘米</div>
<div class="a" style="left:388px;top:110.5px;font-size:15px;color:#222;white-space:nowrap;line-height:18px;z-index:4">灰色</div>

<!-- ===== DRAW TOOLBAR ICONS ===== -->
<svg style="left:0;top:595px" width="681" height="41" viewBox="0 595 681 41">
  <defs>
    <linearGradient id="gry" x1="0" y1="0" x2="1" y2="1"><stop offset="0" stop-color="#a8a8a6"/><stop offset="1" stop-color="#e6e6e4"/></linearGradient>
    <linearGradient id="gry2" x1="0" y1="0" x2="0.6" y2="1"><stop offset="0" stop-color="#b4b4b2"/><stop offset="1" stop-color="#e8e8e6"/></linearGradient>
    <radialGradient id="sph" cx="0.45" cy="0.35" r="0.65"><stop offset="0" stop-color="#f4f4f2"/><stop offset="0.7" stop-color="#d4d4d2"/><stop offset="1" stop-color="#b0b0ae"/></radialGradient>
    <linearGradient id="curveb" x1="0" y1="0" x2="0" y2="1"><stop offset="0" stop-color="#4a84c8"/><stop offset="0.6" stop-color="#8fb4dc"/><stop offset="1" stop-color="#d0d0ce"/></linearGradient>
  </defs>
  <!-- select pressed -->
  <rect x="16.5" y="600.5" width="30" height="31.5" rx="3" fill="#d8d7d4" stroke="#a6a4a0" stroke-width="1"/>
  <path d="M18 631.3H45" stroke="#eeeeec" stroke-width="0.6" stroke-dasharray="2 2"/>
  <path d="M26.5 606.5V621.5L29.8 618.4L32.6 624.6L35.2 623.4L32.5 617.4H37Z" fill="#fff" stroke="#000" stroke-width="1.2" stroke-linejoin="round"/>
  <!-- line -->
  <path d="M63.5 623.5L81 606.5" stroke="#111" stroke-width="1.3"/>
  <!-- arrow -->
  <path d="M95 615.5H110" stroke="#000" stroke-width="1.6"/>
  <path d="M114.5 615.5L108.5 612.4V618.6Z" fill="#000"/>
  <!-- rectangle -->
  <rect x="127.6" y="608.6" width="19" height="14" fill="url(#gry)" stroke="#2c2c2c" stroke-width="1.2"/>
  <!-- ellipse -->
  <ellipse cx="170.3" cy="615.4" rx="10.4" ry="7" fill="url(#gry2)" stroke="#333" stroke-width="1"/>
  <!-- dimension -->
  <path d="M229.6 611.8V620.2M229.6 615.5H242M242.3 609V623" stroke="#000" stroke-width="2.4"/>
  <path d="M240.5 609.2H243.5M240.5 622.8H243.5" stroke="#000" stroke-width="1.2"/>
  <path d="M232 615H240" stroke="#b06a30" stroke-width="0.6"/>
  <!-- curve / pencil -->
  <path d="M265 606.5Q270.5 608 272.6 611.5Q273.3 613 273.3 616V624.5H265Z" fill="url(#curveb)"/>
  <path d="M265 606Q270.5 607.5 272.8 611.5Q273.6 613 273.6 616V620Q273.6 623.6 276 623.8Q278.4 623.8 279 621" fill="none" stroke="#000" stroke-width="1.3"/>
  <path d="M278.6 622.3L278.8 618.8L285.8 604.6Q286.6 603.8 287.8 603.9H289Q290 604.3 289.8 605.4L282.2 620.8Z" fill="#e6b050" stroke="#000" stroke-width="1.2" stroke-linejoin="round"/>
  <path d="M286 604.8Q286.8 604.2 287.8 604.2H288.9Q289.6 604.5 289.5 605.4L288.2 608.2L284.6 607.6Z" fill="#e2642e"/>
  <path d="M280.2 619.5L286.5 607" stroke="#fff4d0" stroke-width="0.7" opacity="0.8"/>
  <path d="M278.9 622L279 619.4L281.6 620.6Z" fill="#c89070"/>
  <!-- connector -->
  <path d="M322 608.6H327.5V622.3H331.5" fill="none" stroke="#111" stroke-width="1.2"/>
  <circle cx="319.8" cy="608.6" r="2.3" fill="#fff" stroke="#111" stroke-width="1.1"/>
  <circle cx="333.7" cy="622.3" r="2.3" fill="#fff" stroke="#111" stroke-width="1.1"/>
  <!-- arrow line -->
  <path d="M367 615.5H382" stroke="#000" stroke-width="1.6"/>
  <path d="M386.5 615.5L380.5 612.6V618.4Z" fill="#000"/>
  <!-- diamond -->
  <path d="M427.2 606.2L438 616.2L427.2 626.4L416.4 616.2Z" fill="url(#gry2)" stroke="#4a4a48" stroke-width="1.1"/>
  <!-- smiley -->
  <circle cx="476.5" cy="615.5" r="10.3" fill="url(#sph)" stroke="#3a3a38" stroke-width="1"/>
  <circle cx="473" cy="612.2" r="1.6" fill="#fafaf9" stroke="#b4b4b2" stroke-width="0.6"/><circle cx="480" cy="612.2" r="1.6" fill="#fafaf9" stroke="#b4b4b2" stroke-width="0.6"/>
  <path d="M470.2 617.2Q476.5 623 482.8 617.2" fill="none" stroke="#a8a8a6" stroke-width="1.1"/><path d="M470.5 618.2Q476.5 623.6 482.5 618.2" fill="none" stroke="#f6f6f4" stroke-width="0.8"/>
  <!-- double arrow -->
  <path d="M515.2 616L522.5 609.3V612.6H530.5V609.3L537.8 616L530.5 622.7V619.4H522.5V622.7Z" fill="url(#gry2)" stroke="#2a2a2a" stroke-width="1.1" stroke-linejoin="round"/>
  <!-- flowchart -->
  <rect x="566.6" y="605.8" width="20.6" height="20.4" fill="url(#gry2)" stroke="#1e1e1e" stroke-width="1.4"/>
  <path d="M572 607V625.5M567.5 610.5H586.5" stroke="#f6f6f4" stroke-width="1" opacity="0.8"/>
  <!-- callout -->
  <path d="M617.5 605.5H635.8Q638 605.5 638 607.7V619Q638 621 635.8 621H626.2L615.2 626.6L621 621H617.5Q615.2 621 615.2 619V607.7Q615.2 605.5 617.5 605.5Z" fill="url(#gry2)" stroke="#2a2a2a" stroke-width="1.1" stroke-linejoin="round"/>
</svg>
<div class="a" style="left:196px;top:602.5px;font-family:'Liberation Serif',serif;font-weight:bold;font-size:23.5px;line-height:24px;color:#000;z-index:4">T</div>

<div class="a" style="left:0;top:659px;width:681px;height:1px;background:#b8b6b2;z-index:6"></div>
</body></html>
